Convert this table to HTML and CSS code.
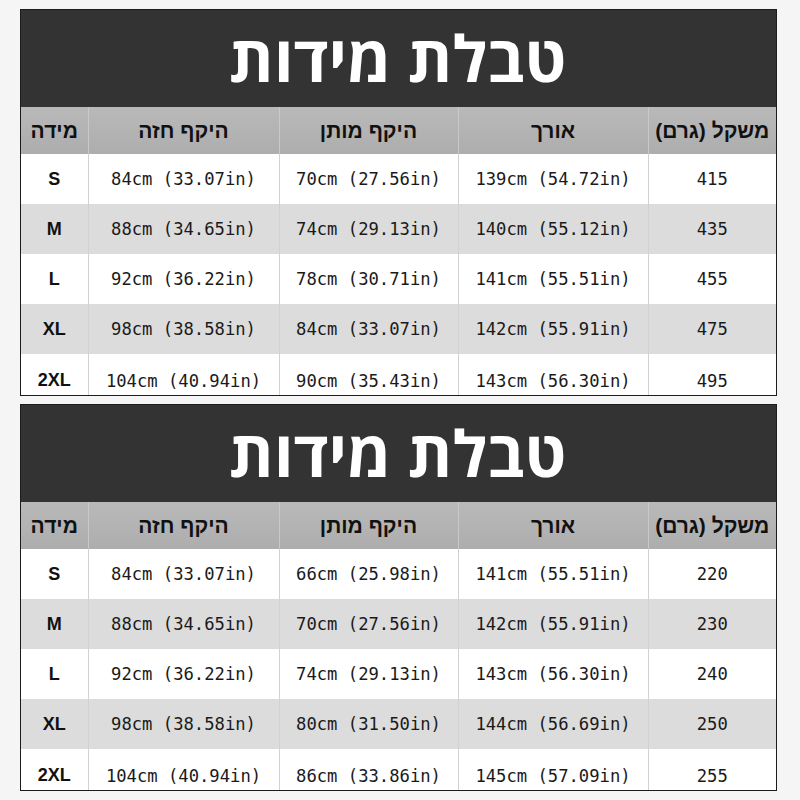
FILE: index.html
```html
<!DOCTYPE html>
<html lang="he">
<head>
<meta charset="utf-8">
<title>טבלת מידות</title>
<link rel="stylesheet" href="styles.css">
</head>
<body>
<div class="page">
  <section class="chart">
    <div class="title" dir="rtl">טבלת מידות</div>
    <table class="sizes">
      <colgroup>
        <col class="c1"><col class="c2"><col class="c3"><col class="c4"><col class="c5">
      </colgroup>
      <thead>
        <tr><th>מידה</th><th>היקף חזה</th><th>היקף מותן</th><th>אורך</th><th dir="rtl">משקל (גרם)</th></tr>
      </thead>
      <tbody>
        <tr><td class="size">S</td><td>84cm (33.07in)</td><td>70cm (27.56in)</td><td>139cm (54.72in)</td><td>415</td></tr>
        <tr class="alt"><td class="size">M</td><td>88cm (34.65in)</td><td>74cm (29.13in)</td><td>140cm (55.12in)</td><td>435</td></tr>
        <tr><td class="size">L</td><td>92cm (36.22in)</td><td>78cm (30.71in)</td><td>141cm (55.51in)</td><td>455</td></tr>
        <tr class="alt"><td class="size">XL</td><td>98cm (38.58in)</td><td>84cm (33.07in)</td><td>142cm (55.91in)</td><td>475</td></tr>
        <tr class="last"><td class="size">2XL</td><td>104cm (40.94in)</td><td>90cm (35.43in)</td><td>143cm (56.30in)</td><td>495</td></tr>
      </tbody>
    </table>
  </section>
  <section class="chart">
    <div class="title" dir="rtl">טבלת מידות</div>
    <table class="sizes">
      <colgroup>
        <col class="c1"><col class="c2"><col class="c3"><col class="c4"><col class="c5">
      </colgroup>
      <thead>
        <tr><th>מידה</th><th>היקף חזה</th><th>היקף מותן</th><th>אורך</th><th dir="rtl">משקל (גרם)</th></tr>
      </thead>
      <tbody>
        <tr><td class="size">S</td><td>84cm (33.07in)</td><td>66cm (25.98in)</td><td>141cm (55.51in)</td><td>220</td></tr>
        <tr class="alt"><td class="size">M</td><td>88cm (34.65in)</td><td>70cm (27.56in)</td><td>142cm (55.91in)</td><td>230</td></tr>
        <tr><td class="size">L</td><td>92cm (36.22in)</td><td>74cm (29.13in)</td><td>143cm (56.30in)</td><td>240</td></tr>
        <tr class="alt"><td class="size">XL</td><td>98cm (38.58in)</td><td>80cm (31.50in)</td><td>144cm (56.69in)</td><td>250</td></tr>
        <tr class="last"><td class="size">2XL</td><td>104cm (40.94in)</td><td>86cm (33.86in)</td><td>145cm (57.09in)</td><td>255</td></tr>
      </tbody>
    </table>
  </section>
</div>
</body>
</html>
```

FILE: styles.css
```css
* { box-sizing: border-box; }
html, body {
  margin: 0;
  padding: 0;
  background: #f5f5f5;
}
.page {
  padding: 9px 0 0 20px;
  display: flex;
  flex-direction: column;
  gap: 8px;
}
.chart {
  width: 757px;
  border: 1px solid #1c1c1c;
  background: #ffffff;
}
.title {
  height: 97px;
  background: #333333;
  color: #ffffff;
  font-family: "Open Sans", "Liberation Sans", "DejaVu Sans", sans-serif;
  font-weight: 700;
  font-size: 64px;
  line-height: 95px;
  text-align: center;
  padding-right: 2px;
}
.sizes {
  width: 100%;
  border-collapse: collapse;
  table-layout: fixed;
}
.c1 { width: 67px; }
.c2 { width: 191px; }
.c3 { width: 179px; }
.c4 { width: 190px; }
.c5 { width: 128px; }
.sizes th {
  height: 47px;
  background: linear-gradient(#b9b9b9, #adadad);
  color: #111111;
  font-family: "Liberation Sans", "DejaVu Sans", sans-serif;
  font-weight: 700;
  font-size: 21px;
  text-align: center;
  padding: 0;
  border-left: 1px solid #c9c9c9;
  white-space: nowrap;
}
.sizes th:first-child, .sizes td:first-child { border-left: none; }
.sizes td {
  height: 50px;
  padding: 0;
  text-align: center;
  vertical-align: middle;
  color: #1a1a1a;
  font-family: "DejaVu Sans Mono", "Liberation Mono", monospace;
  font-size: 17.2px;
  border-left: 1px solid #d2d2d2;
  white-space: nowrap;
}
.sizes tr.alt td { background: #dcdcdc; }
.sizes td.size {
  font-family: "Liberation Sans", "DejaVu Sans", sans-serif;
  font-weight: 700;
  font-size: 18px;
  color: #111111;
}
.sizes tr.last td {
  height: 41px;
  vertical-align: bottom;
  padding-bottom: 4px;
}
```
